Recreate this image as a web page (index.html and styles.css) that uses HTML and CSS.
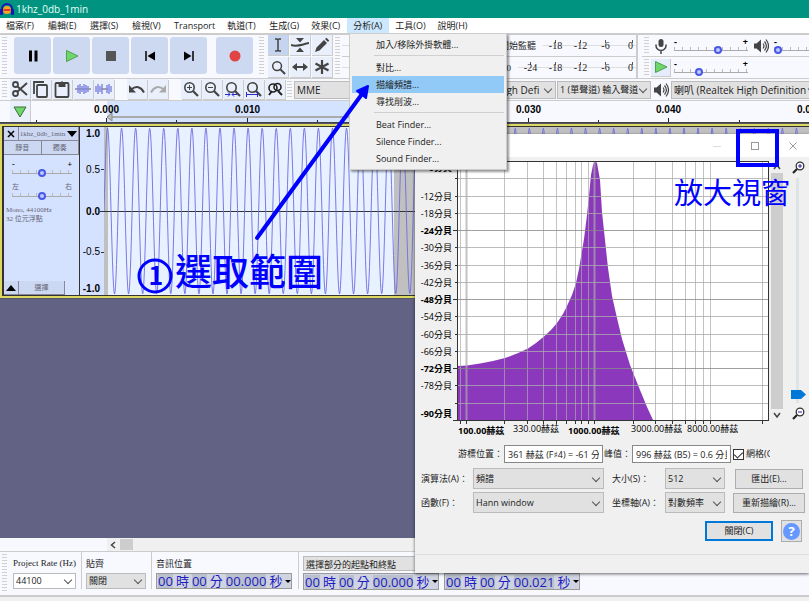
FILE: index.html
```
<!DOCTYPE html>
<html lang="zh-Hant">
<head>
    <meta charset="UTF-8">
    <meta name="viewport" content="width=device-width, initial-scale=1.0">
    <title>1khz_0db_1min</title>
    <link rel="stylesheet" href="styles.css">
</head>
<body>
    <svg class="symbols" aria-hidden="true">
        <symbol id="i-mic" viewBox="0 0 16 16"><rect x="5.5" y="1" width="5" height="8" rx="2.5" fill="#444"/><path d="M3 6.500v1a5 5 0 0 0 10 0v-1M8 12.500V16" fill="none" stroke="#444" stroke-width="1.500"/></symbol>
        <symbol id="i-speaker" viewBox="0 0 16 16"><path d="M1 5.500h2.500L8 1.500v13L3.500 10.500H1z" fill="#444"/><path d="M10 5.500q2 2.500 0 5M11.500 3.500q3.800 4.500 0 9M13 1.500q5 6.500 0 13" fill="none" stroke="#444" stroke-width="1.200"/></symbol>
        <symbol id="i-play" viewBox="0 0 14 14"><path d="M1.500 1.500L13 7 1.500 12.500z" fill="#6fd66b" stroke="#4f9f4d"/></symbol>
        <symbol id="i-zoom" viewBox="0 0 16 16"><circle cx="6.500" cy="6.500" r="4.700" fill="none" stroke="#444" stroke-width="1.600"/><path d="M10 10l5 5" stroke="#444" stroke-width="2.200"/></symbol>
    </svg>

    <div class="app">
        <header class="titlebar">
            <svg width="14" height="14" viewBox="0 0 14 14"><circle cx="7" cy="8" r="4" fill="#f5a623"/><path d="M3.500 8h7" stroke="#e03c1f" stroke-width="2"/><path d="M2 9V7a5 5 0 0 1 10 0v2" fill="none" stroke="#1717b5" stroke-width="2"/><rect x="0" y="7" width="3" height="6" rx="1" fill="#1717b5"/><rect x="11" y="7" width="3" height="6" rx="1" fill="#1717b5"/></svg>
            <span>1khz_0db_1min</span>
        </header>

        <nav class="menubar">
            <button>檔案(F)</button>
            <button>編輯(E)</button>
            <button>選擇(S)</button>
            <button>檢視(V)</button>
            <button>Transport</button>
            <button>軌道(T)</button>
            <button>生成(G)</button>
            <button>效果(C)</button>
            <button class="open">分析(A)</button>
            <button>工具(O)</button>
            <button>說明(H)</button>
            <div class="dropdown">
                <button>加入/移除外掛軟體...</button>
                <hr>
                <button>對比...</button>
                <button class="active">描繪頻譜...</button>
                <button>尋找削波...</button>
                <hr>
                <button>Beat Finder...</button>
                <button>Silence Finder...</button>
                <button>Sound Finder...</button>
            </div>
        </nav>

        <div class="toolbar top">
            <i class="grip"></i>
            <div class="transport">
                <button aria-label="暫停"><svg width="14" height="14"><path d="M4.500 1.500v11M10 1.500v11" stroke="#000" stroke-width="3"/></svg></button>
                <button aria-label="播放"><svg width="14" height="14"><use href="#i-play"/></svg></button>
                <button aria-label="停止"><svg width="14" height="14"><rect x="2" y="2" width="10" height="10" fill="#555"/></svg></button>
                <button aria-label="開始"><svg width="14" height="14"><path d="M3 2v10" stroke="#000" stroke-width="1.500"/><path d="M12 2.500v9L4.500 7z"/></svg></button>
                <button aria-label="結尾"><svg width="14" height="14"><path d="M11 2v10" stroke="#000" stroke-width="1.500"/><path d="M2 2.500v9L9.500 7z"/></svg></button>
                <button class="record" aria-label="錄音"><svg width="14" height="14"><circle cx="7" cy="7" r="5.500" fill="#e04444"/></svg></button>
            </div>
            <i class="grip"></i>
            <div class="tools">
                <button class="on" aria-label="選擇工具"><svg width="16" height="16"><path d="M5 2h2l1 1 1-1h2M8 3v10M5 14h2l1-1 1 1h2" fill="none" stroke="#444" stroke-width="1.500"/></svg></button>
                <button aria-label="包絡線工具"><svg width="18" height="16"><path d="M5 1h8L9 5.500zM5 15h8L9 10.500z" fill="#444"/><path d="M0 8c6 2 9 0 18-2" fill="none" stroke="#444" stroke-width="2"/></svg></button>
                <button aria-label="繪製工具"><svg width="16" height="16"><path d="M1 15l1.500-4.500L10 3l3 3-7.500 7.500zM11 2l1.500-1.200 2.700 2.700L14 5z" fill="#444"/></svg></button>
                <button aria-label="縮放工具"><svg width="15" height="15"><use href="#i-zoom"/></svg></button>
                <button aria-label="時間移動工具"><svg width="16" height="16"><path d="M3 8h10" stroke="#444" stroke-width="2"/><path d="M0 8l5-4v8zM16 8l-5-4v8z" fill="#444"/></svg></button>
                <button aria-label="多工具模式"><svg width="16" height="16"><path d="M8 1v14M1.500 4.500l13 7M14.500 4.500l-13 7" stroke="#444" stroke-width="2.200"/></svg></button>
            </div>
            <i class="grip"></i>
            <div class="meters">
                <div class="meter"><b>開始監聽</b><span>-18</span><span>-12</span><span>-6</span><span>0</span></div>
                <div class="meter"><b>0</b><span>-24</span><span>-18</span><span>-12</span><span>-6</span><span>0</span></div>
            </div>
            <div class="mixers">
                <div class="mixer">
                    <i class="grip"></i>
                    <svg class="ico" width="16" height="16"><use href="#i-mic"/></svg>
                    <label class="slider"><span>-</span><span>+</span><input type="range" value="60" aria-label="錄音音量"></label>
                    <svg class="ico" width="16" height="16"><use href="#i-speaker"/></svg>
                    <label class="slider"><span>-</span><span>+</span><input type="range" value="0" aria-label="播放音量"></label>
                </div>
                <div class="mixer">
                    <i class="grip"></i>
                    <button class="ico" aria-label="以指定速度播放"><svg width="14" height="14"><use href="#i-play"/></svg></button>
                    <label class="slider"><span>-</span><span>+</span><input type="range" value="32" aria-label="播放速度"></label>
                </div>
            </div>
        </div>

        <div class="toolbar edit">
            <i class="grip"></i>
            <div class="group">
                <button aria-label="剪下"><svg width="18" height="18"><circle cx="4.500" cy="4.500" r="2.500" fill="none" stroke="#444" stroke-width="1.800"/><circle cx="4.500" cy="13.500" r="2.500" fill="none" stroke="#444" stroke-width="1.800"/><path d="M6 6l10 9M6 12L16 3" stroke="#444" stroke-width="2"/></svg></button>
                <button aria-label="複製"><svg width="18" height="18"><path d="M2 14V2h10" fill="none" stroke="#444" stroke-width="1.800"/><rect x="5" y="5" width="10" height="12" rx="1" fill="none" stroke="#444" stroke-width="1.800"/></svg></button>
                <button aria-label="貼上"><svg width="18" height="18"><rect x="2.500" y="3" width="13" height="14" rx="1" fill="none" stroke="#444" stroke-width="1.800"/><path d="M5.500 2.500h2L9 1l1.500 1.500h2V7h-7z" fill="#444"/></svg></button>
                <button aria-label="修剪"><svg width="18" height="18"><path d="M1 9h16" stroke="#555"/><path d="M4 5v8M6 4v10M8 6v6M10 4v10M12 5v8M14 6v6" stroke="#8289e0" stroke-width="1.500"/></svg></button>
                <button aria-label="靜音"><svg width="18" height="18"><path d="M6 9h7" stroke="#555"/><path d="M1 6v6M3 4v10M5 6v6M7 4v10M12 5v8M14 4v10M16 6v6" stroke="#8289e0" stroke-width="1.500"/></svg></button>
            </div>
            <div class="group">
                <button aria-label="復原"><svg width="18" height="18"><path d="M3 9.500q8-6 13 3" fill="none" stroke="#444" stroke-width="2"/><path d="M1 5v7.500h7z" fill="#444"/></svg></button>
                <button aria-label="重做"><svg width="18" height="18"><path d="M15 9.500q-8-6-13 3" fill="none" stroke="#aaa" stroke-width="2"/><path d="M17 5v7.500h-7z" fill="#aaa"/></svg></button>
            </div>
            <div class="group">
                <button aria-label="放大"><svg width="16" height="16"><use href="#i-zoom"/><path d="M6.500 4v5M4 6.500h5" stroke="#444"/></svg></button>
                <button aria-label="縮小"><svg width="16" height="16"><use href="#i-zoom"/><path d="M4 6.500h5" stroke="#444"/></svg></button>
                <button aria-label="縮放至選擇部分"><svg width="16" height="16"><use href="#i-zoom"/><path d="M0 13.500h5M7 13.500h5M3 11.500l2 2-2 2M9 11.500l-2 2 2 2" stroke="#2a2ad0" fill="none"/></svg></button>
                <button aria-label="縮放至專案"><svg width="16" height="16"><use href="#i-zoom"/><path d="M.5 11v5M11.500 11v5M1 13.500h10" stroke="#2a2ad0"/></svg></button>
                <button aria-label="切換縮放"><svg width="16" height="16"><circle cx="6" cy="7" r="4" fill="none" stroke="#222" stroke-width="1.600"/><circle cx="10.500" cy="6" r="3.500" fill="none" stroke="#222" stroke-width="1.600"/><path d="M5 10l-3 4M11 10l4 4" stroke="#222" stroke-width="2"/></svg></button>
            </div>
            <i class="grip"></i>
            <div class="devices">
                <span class="select host"><select aria-label="音訊主機"><option>MME</option></select></span>
                <svg width="16" height="16"><use href="#i-mic"/></svg>
                <span class="select input"><select aria-label="錄音裝置"><option>麥克風 (High Defi</option></select></span>
                <span class="select channels"><select aria-label="錄音聲道"><option>1 (單聲道) 輸入聲道</option></select></span>
                <svg width="16" height="16"><use href="#i-speaker"/></svg>
                <span class="select output"><select aria-label="播放裝置"><option>喇叭 (Realtek High Definition</option></select></span>
            </div>
        </div>

        <div class="ruler">
            <button aria-label="釘選播放頭"><svg width="14" height="12"><path d="M1 1h12L7 11z" fill="#6fd66b" stroke="#3c6e3b"/></svg></button>
            <svg id="timeline"></svg>
        </div>

        <main class="tracks">
            <section class="track">
                <div class="panel">
                    <div class="panel-head">
                        <button aria-label="關閉音軌"><svg width="8" height="8"><path d="M1 1l6 6M7 1L1 7" stroke="#000" stroke-width="1.500"/></svg></button>
                        <button class="name">1khz_0db_1min<svg width="10" height="6"><path d="M0 0h10L5 6z"/></svg></button>
                    </div>
                    <div class="panel-row"><button>靜音</button><button>獨奏</button></div>
                    <label class="slider"><span>-</span><span>+</span><input type="range" value="50" aria-label="增益"></label>
                    <label class="slider pan"><span>左</span><span>右</span><input type="range" value="50" aria-label="左右平衡"></label>
                    <p>Mono, 44100Hz<br>32 位元浮點</p>
                    <div class="panel-foot">
                        <button aria-label="摺疊"><svg width="10" height="6"><path d="M0 6h10L5 0z"/></svg></button>
                        <button>選擇</button>
                    </div>
                </div>
                <svg class="scale" width="24" height="168">
                    <g text-anchor="end">
                        <text class="major" x="20" y="10">1.0</text>
                        <text x="20" y="46">0.5</text>
                        <text class="major" x="20" y="88">0.0</text>
                        <text x="20" y="128">-0.5</text>
                        <text class="major" x="20" y="165">-1.0</text>
                    </g>
                    <path d="M21 42.500h3M20 84.500h4M21 125.500h3" stroke="#333"/>
                </svg>
                <svg id="wave" class="wave"></svg>
            </section>
        </main>

        <div class="hscroll"><svg width="6" height="8"><path d="M5 1L1.500 4 5 7" fill="none" stroke="#444" stroke-width="1.500"/></svg><i></i></div>

        <footer class="selection">
            <i class="grip"></i>
            <div class="field">
                <label class="serif" for="rate">Project Rate (Hz)</label>
                <span class="select white"><select id="rate"><option>44100</option></select></span>
            </div>
            <div class="field snap">
                <label for="snap">貼齊</label>
                <span class="select"><select id="snap"><option>關閉</option></select></span>
            </div>
            <div class="field position">
                <span>音訊位置</span>
                <div class="time"><b>00</b>時<b>00</b>分<b>00.000</b>秒<i></i></div>
            </div>
            <div class="field last">
                <span class="select range"><select aria-label="選擇範圍"><option>選擇部分的起點和終點</option></select></span>
                <div class="times">
                    <div class="time"><b>00</b>時<b>00</b>分<b>00.000</b>秒<i></i></div>
                    <div class="time"><b>00</b>時<b>00</b>分<b>00.021</b>秒<i></i></div>
                </div>
            </div>
        </footer>
        <div class="status"></div>
    </div>

    <section class="dialog">
        <div class="dialog-title">
            <button aria-label="最小化"><svg width="8" height="8"><path d="M0 4.500h8" stroke="#ddd"/></svg></button>
            <button aria-label="最大化"><svg width="8" height="8"><rect x=".5" y=".5" width="7" height="7" fill="none" stroke="#999"/></svg></button>
            <button aria-label="關閉視窗"><svg width="8" height="8"><path d="M.5.5l7 7M7.500.5l-7 7" stroke="#999"/></svg></button>
        </div>
        <div class="plot">
            <svg id="spectrum" width="355" height="280"></svg>
            <div class="vscroll">
                <svg width="8" height="6"><path d="M1 5l3-4 3 4" fill="none" stroke="#444" stroke-width="1.500"/></svg>
                <i></i>
                <svg width="8" height="6"><path d="M1 1l3 4 3-4" fill="none" stroke="#444" stroke-width="1.500"/></svg>
            </div>
            <div class="vzoom">
                <svg width="13" height="13"><circle cx="8" cy="5" r="3.800" fill="#fff" stroke="#333" stroke-width="1.300"/><path d="M5 8l-4 4" stroke="#222" stroke-width="2.200"/><path d="M8 3v4M6 5h4" stroke="#2222b0"/></svg>
                <svg class="rail" width="16" height="225"><path d="M7.500 0v225" stroke="#dde4e6" stroke-width="3"/><path d="M1 212h10l5 4.500-5 4.500H1z" fill="#0078d7"/></svg>
                <svg width="13" height="13"><circle cx="8" cy="5" r="3.800" fill="#fff" stroke="#333" stroke-width="1.300"/><path d="M5 8l-4 4" stroke="#222" stroke-width="2.200"/><path d="M6 5h4" stroke="#2222b0"/></svg>
            </div>
        </div>
        <div class="cursor-row">
            <label for="cursor">游標位置：</label>
            <input id="cursor" type="text" readonly value="361 赫茲 (F♯4) = -61 分貝">
            <label for="peak">峰值：</label>
            <input id="peak" type="text" readonly value="996 赫茲 (B5) = 0.6 分貝">
            <input id="grid" type="checkbox" checked>
            <label class="grid-label" for="grid">網格(G)</label>
        </div>
        <div class="options">
            <label for="algorithm">演算法(A)：</label>
            <span class="select"><select id="algorithm"><option>頻譜</option></select></span>
            <label for="size">大小(S)：</label>
            <span class="select"><select id="size"><option>512</option></select></span>
            <button class="export">匯出(E)...</button>
            <label for="function">函數(F)：</label>
            <span class="select"><select id="function"><option>Hann window</option></select></span>
            <label for="axis">坐標軸(A)：</label>
            <span class="select"><select id="axis"><option>對數頻率</option></select></span>
            <button>重新描繪(R)...</button>
        </div>
        <div class="actions">
            <button class="close">關閉(C)</button>
            <button class="help" aria-label="說明"><span>?</span></button>
        </div>
        <div class="dialog-status"></div>
    </section>

    <div class="notes">
        <svg width="809" height="601">
            <path d="M257 238L362 94" stroke="#00f" stroke-width="4" stroke-linecap="round"/>
            <path d="M368 86l-2 12-9-7z" fill="#00f" stroke="#00f" stroke-width="2" stroke-linejoin="round"/>
            <rect x="738" y="131" width="39" height="34" fill="none" stroke="#00f" stroke-width="4"/>
            <circle cx="155" cy="276" r="16" fill="none" stroke="#00f" stroke-width="3"/>
            <text class="number" x="156" y="285">1</text>
            <text class="step" x="175" y="286">選取範圍</text>
            <text class="tip" x="674" y="204">放大視窗</text>
        </svg>
    </div>

    <script src="script.js"></script>
</body>
</html>
```
FILE: styles.css
```
* {
    box-sizing: border-box;
}
body {
    margin: 0;
    font-family: "Open Sans", "Noto Sans CJK TC", sans-serif;
    font-size: 9px;
    line-height: 12px;
    color: #222;
    position: relative;
    overflow: hidden;
}
button, input, select {
    font: inherit;
    color: inherit;
    margin: 0;
}
button {
    display: flex;
    align-items: center;
    justify-content: center;
    border: none;
    padding: 0;
    background: none;
    white-space: nowrap;
}
svg {
    display: block;
    flex: none;
}
.symbols {
    position: absolute;
    width: 0;
    height: 0;
}
.app {
    display: flex;
    flex-direction: column;
    min-height: 100vh;
    background: #f0f0f0;
}

/* title and menus */
.titlebar {
    display: flex;
    align-items: center;
    gap: 2px;
    height: 18px;
    background: #009480;
    color: #e8fffa;
    font-size: 10px;
}
.menubar {
    display: flex;
    height: 15px;
    background: #fff;
    position: relative;
}
.menubar > button {
    min-width: 42px;
    padding: 0 6px;
    justify-content: flex-start;
}
.menubar > .open {
    background: #cce8ff;
}
.dropdown {
    position: absolute;
    left: 349px;
    top: 15px;
    z-index: 20;
    width: 158px;
    padding: 2px;
    background: #f0f0f0;
    border: 1px solid #ccc;
    box-shadow: 2px 2px 2px rgba(0, 0, 0, 0.4);
}
.dropdown button {
    width: 100%;
    height: 17px;
    padding-left: 24px;
    justify-content: flex-start;
}
.dropdown .active {
    background: #91c9f7;
}
.dropdown hr {
    border: none;
    border-top: 1px solid #d0d0d0;
    margin: 2px 0 3px 22px;
}

/* toolbars */
.toolbar {
    display: flex;
    background: #f8f9ff;
    border-top: 1px solid #ccc;
}
.grip {
    flex: none;
    width: 5px;
    margin: 2px 2px;
    background: repeating-linear-gradient(#d0d0d0 0 1px, #f8f9ff 1px 3px);
}
.toolbar.top {
    height: 45px;
    border-top-width: 2px;
}
.transport {
    display: flex;
    gap: 2px;
    padding: 2px 4px 2px 5px;
}
.transport button {
    width: 37px;
    height: 37px;
    border-radius: 3px;
    background: #cdd9f1;
}
.transport .record {
    margin-left: 7px;
}
.tools {
    display: grid;
    grid-template-columns: repeat(3, 21px);
    gap: 1px;
    margin-left: 2px;
}
.tools button {
    background: #eaf0fb;
    border-right: 1px solid #ccc;
    border-bottom: 1px solid #ccc;
}
.tools .on {
    background: #c5d4ef;
}
.meters {
    width: 296px;
    border-right: 2px solid #ccc;
    font-family: "Liberation Serif", "Noto Sans CJK TC", serif;
    font-size: 10px;
}
.meter {
    display: flex;
    align-items: center;
    justify-content: flex-end;
    height: 22px;
    padding-right: 3px;
    border-bottom: 1px solid #ccc;
    background: linear-gradient(#ddd, #ddd) 0 10px / 100% 1px no-repeat;
}
.meter span {
    width: 25px;
    text-align: center;
    background: linear-gradient(#555, #555) center 0 / 1px 3px no-repeat;
}
.meter span:last-child {
    width: 15px;
    text-align: right;
    background-position: 14px 0;
}
.meter b {
    font-weight: normal;
    font-size: 9px;
    padding: 0 7px 0 5px;
    background: #f8f9ff;
}
.mixers {
    flex: 1;
    min-width: 0;
    margin-left: 4px;
}
.mixer {
    display: flex;
    align-items: center;
    height: 22px;
    border-bottom: 1px solid #ccc;
}
.mixer .grip {
    align-self: stretch;
}
.ico {
    width: 20px;
    height: 18px;
    padding: 0 2px;
}
button.ico {
    background: #e5edfb;
    border-right: 1px solid #ccc;
    border-bottom: 1px solid #ccc;
}
.slider {
    display: flex;
    flex-wrap: wrap;
    justify-content: space-between;
    flex: none;
    width: 74px;
    margin: 0 3px;
    color: #000;
    font-weight: bold;
    line-height: 9px;
}
.slider input {
    appearance: none;
    width: 100%;
    height: 8px;
    background:
        linear-gradient(#aaa, #aaa) 0 4px / 100% 1px no-repeat,
        repeating-linear-gradient(90deg, #bbb 0 1px, transparent 1px 8px) 0 1px / 100% 3px no-repeat;
}
.slider input::-webkit-slider-thumb {
    appearance: none;
    width: 8px;
    height: 8px;
    border: 2px solid #4a58e8;
    border-radius: 50%;
    background: #c0c8ff;
}
.toolbar.edit {
    height: 22px;
}
.group {
    display: flex;
    gap: 1px;
    margin-left: 13px;
}
.grip + .group {
    margin-left: 1px;
}
.group button {
    width: 20px;
    height: 20px;
    background: #eaf0fb;
    box-shadow: 1px 1px 0 #ccc;
}
.devices {
    display: flex;
    align-items: center;
    flex: 1;
    min-width: 0;
    gap: 1px;
    font-size: 10px;
    overflow: hidden;
}
.devices svg {
    margin: 0 1px;
}
.devices .select {
    height: 18px;
    flex: none;
}
.devices .host {
    width: 144px;
}
.devices .input {
    width: 98px;
}
.devices .channels {
    width: 94px;
    font-size: 9px;
}
.devices .output {
    flex: 1 0 auto;
}

/* drop-down box with its own arrow */
.select {
    display: flex;
    position: relative;
    min-width: 0;
    background: #e1e1e1;
    border: 1px solid #bbb;
}
.select::after {
    content: "";
    position: absolute;
    right: 4px;
    top: calc(50% - 4px);
    width: 5px;
    height: 5px;
    border-right: 1px solid #555;
    border-bottom: 1px solid #555;
    transform: rotate(45deg);
}
.select select {
    appearance: none;
    width: 100%;
    padding: 0 12px 0 2px;
    border: none;
    background: none;
    overflow: hidden;
}
.select.white {
    background: #fff;
}

/* time ruler and track */
.ruler {
    display: flex;
    height: 24px;
    background: #f8f9ff;
    border-top: 1px solid #ccc;
    border-bottom: 2px solid #444;
}
.ruler button {
    width: 21px;
    margin-left: 10px;
    background: #eaf0fb;
    border-right: 1px solid #ccc;
}
#timeline {
    flex: 1;
    width: 0;
    height: 21px;
}
#timeline text {
    font: bold 10px "Liberation Sans", sans-serif;
    text-anchor: middle;
}
.tracks {
    flex: 1;
    background: #626284;
}
.track {
    display: flex;
    height: 174px;
    padding: 1px 0 1px 2px;
    border: 2px solid #dcd860;
    border-right: none;
    outline: 1px solid #55556a;
    background: #333;
}
.panel {
    display: flex;
    flex-direction: column;
    width: 75px;
    margin-right: 1px;
    background: #d4e1ff;
    color: #667;
    font-family: "Liberation Serif", "Noto Sans CJK TC", serif;
    font-size: 7px;
}
.panel-head, .panel-row, .panel-foot {
    display: flex;
    height: 14px;
}
.panel button {
    flex: 1;
    min-width: 0;
    background: #ccd8f2;
    border-right: 1px solid #889;
    border-bottom: 1px solid #889;
}
.panel-head button:first-child, .panel-foot button:first-child {
    flex: none;
    width: 15px;
}
.panel-head .name {
    gap: 2px;
}
.panel .slider {
    width: 60px;
    margin: 5px 8px 0;
    font-size: 8px;
}
.panel .pan {
    font-weight: normal;
    color: #667;
    margin-top: 6px;
    font-size: 7px;
}
.panel p {
    margin: 6px 2px 0;
    line-height: 9px;
}
.panel-foot {
    width: 61px;
    margin-top: auto;
}
.scale {
    background: #d4e1ff;
}
.scale text {
    font: 10px "Liberation Sans", sans-serif;
}
.scale .major {
    font-weight: bold;
}
.wave {
    flex: 1;
    width: 0;
    height: 168px;
    background: #c0c0c0;
}

/* bottom bars */
.hscroll {
    display: flex;
    align-items: center;
    height: 13px;
    padding-left: 110px;
    gap: 4px;
    background: linear-gradient(#f8f9ff, #f8f9ff) 0 0 / 107px 100% no-repeat #f0f0f0;
}
.hscroll i {
    width: 13px;
    height: 11px;
    background: #cdcdcd;
}
.selection {
    display: flex;
    height: 46px;
    background: #f8f9ff;
    border-top: 1px solid #ccc;
    border-bottom: 2px solid #ccc;
}
.field {
    display: flex;
    flex-direction: column;
    gap: 2px;
    padding: 4px 5px 0 4px;
    border-right: 1px solid #ccc;
    margin: 0 0 6px;
    white-space: nowrap;
}
.field > label, .field > span:first-child {
    height: 15px;
    line-height: 15px;
}
.field.position {
    padding-right: 6px;
}
.field.last {
    border: none;
}
.field .select {
    height: 17px;
}
.serif {
    font-family: "Liberation Serif", serif;
}
.field .serif {
    font-size: 9px;
    width: 63px;
}
.snap .select {
    width: 60px;
}
.field .range {
    width: 160px;
}
.times {
    display: flex;
    gap: 5px;
}
.time {
    display: flex;
    align-items: center;
    gap: 3px;
    width: 136px;
    height: 17px;
    padding-left: 1px;
    border: 1px solid #999;
    background: #d0d4e0;
    color: #1c1cc0;
    font-size: 13px;
}
.time b {
    font-weight: normal;
    line-height: 14px;
    background: #b9bfcc;
}
.time i {
    border: 3px solid transparent;
    border-top-color: #000;
    border-bottom: none;
}
.status {
    height: 4px;
}

/* spectrum window */
.dialog {
    position: absolute;
    left: 415px;
    right: 0;
    top: 134px;
    z-index: 10;
    background: #f0f0f0;
    box-shadow: 0 1px 3px rgba(0, 0, 0, 0.6);
}
.dialog-title {
    display: flex;
    justify-content: flex-end;
    gap: 30px;
    height: 23px;
    padding-right: 12px;
    background: #fff;
}
.plot {
    display: flex;
    height: 283px;
    padding-top: 4px;
}
#spectrum text {
    font-size: 9px;
}
#spectrum .y {
    text-anchor: end;
}
#spectrum .major {
    font-weight: bold;
}
.vscroll {
    display: flex;
    flex-direction: column;
    align-items: center;
    gap: 3px;
    width: 13px;
    height: 260px;
    padding: 3px 0;
}
.vscroll i {
    flex: 1;
    width: 12px;
    background: #cdcdcd;
}
.vzoom {
    display: flex;
    flex-direction: column;
    align-items: center;
    gap: 4px;
    margin-left: 7px;
}
.cursor-row {
    display: flex;
    align-items: center;
    gap: 1px;
    height: 28px;
    padding: 0 39px 0 43px;
    white-space: nowrap;
    overflow: hidden;
}
.cursor-row label {
    flex: none;
}
.cursor-row input[type="text"] {
    width: 99px;
    height: 18px;
    padding: 0 3px;
    border: 1px solid #888;
    background: #fff;
    flex: none;
    font-family: "Open Sans", "DejaVu Sans", "Noto Sans CJK TC", sans-serif;
}
.cursor-row input[type="checkbox"] {
    appearance: none;
    flex: none;
    width: 11px;
    height: 11px;
    margin: 0 1px;
    border: 1px solid #333;
    background: #fff;
    display: flex;
    justify-content: center;
}
.cursor-row input[type="checkbox"]::after {
    content: "";
    width: 4px;
    height: 7px;
    border-right: 1px solid #222;
    border-bottom: 1px solid #222;
    transform: rotate(45deg);
}
.cursor-row .grid-label {
    flex: 1;
    min-width: 0;
    overflow: hidden;
}
.options {
    display: grid;
    grid-template-columns: 44px 131px 45px 60px 72px;
    column-gap: 8px;
    row-gap: 3px;
    align-items: center;
    padding: 0 4px 0 6px;
    white-space: nowrap;
}
.options .select {
    height: 21px;
}
.options button, .actions button {
    height: 20px;
    background: #e1e1e1;
    border: 1px solid #adadad;
}
.options .export {
    width: 68px;
    margin-left: 2px;
}
.actions {
    display: flex;
    align-items: center;
    justify-content: flex-end;
    gap: 8px;
    height: 36px;
    padding-right: 7px;
}
.actions .close {
    width: 68px;
    border: 2px solid #0078d7;
}
.actions .help {
    width: 21px;
    height: 22px;
}
.help span {
    width: 17px;
    height: 17px;
    border-radius: 50%;
    background: #6699ff;
    color: #fff;
    font-size: 13px;
    font-weight: bold;
    line-height: 17px;
}
.dialog-status {
    height: 19px;
    margin-top: 5px;
    border-top: 1px solid #ddd;
}

/* hand-drawn notes over everything */
.notes {
    position: absolute;
    left: 0;
    top: 0;
    z-index: 30;
    pointer-events: none;
}
.notes text {
    fill: #00f;
    font-family: "Noto Sans CJK TC", sans-serif;
}
.notes .number {
    font-size: 25px;
    font-weight: bold;
    text-anchor: middle;
}
.notes .step {
    font-size: 37px;
    font-weight: 500;
}
.notes .tip {
    font-size: 29px;
}
```
FILE: script.js
```
const NS = 'http://www.w3.org/2000/svg';

function draw(parent, tag, attrs, text) {
    const el = document.createElementNS(NS, tag);
    for (const key in attrs) {
        el.setAttribute(key, attrs[key]);
    }
    if (text) {
        el.textContent = text;
    }
    parent.appendChild(el);
}

// time ruler: 10 ms every 140.6 px
const timeline = document.getElementById('timeline');
const zero = 75;
draw(timeline, 'rect', { x: zero + 1, y: 0, width: 287, height: 21, fill: '#d4e3ff' });
draw(timeline, 'path', { d: 'M' + (zero + 1) + ' 16h288', stroke: '#aaa', 'stroke-width': 2 });
draw(timeline, 'path', { d: 'M' + (zero + 1) + ' 16l5-4v8z', fill: '#bbb', stroke: '#888' });
for (let i = -1; i <= 10; i++) {
    const x = Math.round(zero + i * 70.3) + 0.5;
    const major = i % 2 === 0;
    draw(timeline, 'path', { d: `M${x} ${major ? 17 : 19}V21`, stroke: '#222' });
    if (major) {
        draw(timeline, 'text', { x: x, y: 12 }, (i / 200).toFixed(3));
    }
}

// 1 kHz sine
const wave = document.getElementById('wave');
draw(wave, 'rect', { x: 4, y: 0, width: 286, height: 168, fill: '#e8f1ff' });
draw(wave, 'path', { d: 'M0 84.5h4000', stroke: '#333' });
let d = '';
for (let x = 0; x < 1600; x += 0.5) {
    const y = 84 - 83 * Math.sin(x / 14.06 * 2 * Math.PI);
    d += (x ? 'L' : 'M') + x + ' ' + y.toFixed(1);
}
draw(wave, 'path', { d: d, fill: 'none', stroke: '#6c6ce0', 'stroke-width': 0.9 });

// spectrum plot
const spectrum = document.getElementById('spectrum');
draw(spectrum, 'rect', { x: 42, y: 0, width: 312, height: 259, fill: '#fff' });
const peak = [
    [42, 205], [52, 204.5], [65, 202.5], [78, 200], [90, 197], [102, 192.5], [113, 187.5],
    [121, 182], [129, 175.5], [136, 169], [142, 162], [148, 153], [152, 145], [157, 134],
    [161, 122], [164, 108], [166, 96], [169, 78], [172, 54], [174, 35], [176, 14], [178, 4],
    [180, 0], [182, 2], [185, 19], [187, 51], [190, 79], [193, 107], [197, 135], [202, 157],
    [207, 178], [215, 204], [225, 229], [232, 246], [238, 259], [42, 259]
];
draw(spectrum, 'polygon', { points: peak.join(' '), fill: '#8b38bd' });
const freqs = [46, 52, 90, 113, 129, 142, 152, 161, 167, 174, 180, 219, 241, 258, 271, 281, 289, 296, 348];
freqs.forEach(x => {
    draw(spectrum, 'path', { d: `M${x - 0.5} 0V259`, stroke: '#aaa', 'stroke-opacity': 0.7, 'stroke-width': x === 52 || x === 180 ? 2 : 1 });
    draw(spectrum, 'path', { d: `M${x - 0.5} 259v4`, stroke: '#333' });
});
for (let i = 0; i <= 15; i++) {
    const y = Math.round(i * 17.25) + 0.5;
    const major = i % 4 === 0 || i === 15;
    if (i > 0 && i < 15) {
        draw(spectrum, 'path', { d: `M42 ${y}h312`, stroke: major ? '#888' : '#aaa', 'stroke-opacity': 0.8 });
    }
    draw(spectrum, 'path', { d: `M${major ? 38 : 40} ${y}H42`, stroke: '#333' });
    if (i !== 1 && i !== 14) {
        const labelY = i === 0 ? 10 : i === 15 ? 256 : y + 3;
        draw(spectrum, 'text', { x: 37, y: labelY, class: major ? 'y major' : 'y' }, (i ? -6 * i : 0) + '分貝');
    }
}
draw(spectrum, 'rect', { x: 42.5, y: 0.5, width: 311, height: 259, fill: 'none', stroke: '#333' });
draw(spectrum, 'text', { x: 43, y: 273, class: 'major' }, '100.00赫茲');
draw(spectrum, 'text', { x: 98, y: 271 }, '330.00赫茲');
draw(spectrum, 'text', { x: 153, y: 273, class: 'major' }, '1000.00赫茲');
draw(spectrum, 'text', { x: 216, y: 271 }, '3000.00赫茲');
draw(spectrum, 'text', { x: 272, y: 271 }, '8000.00赫茲');
```
